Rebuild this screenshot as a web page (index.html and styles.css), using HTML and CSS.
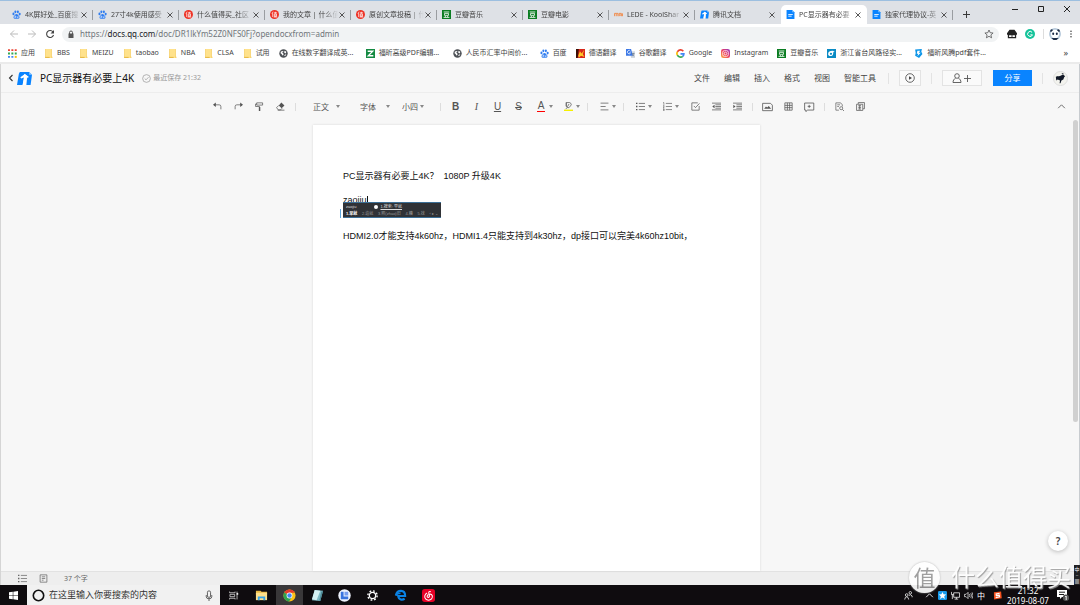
FILE: index.html
```html
<!DOCTYPE html>
<html lang="zh-CN">
<head>
<meta charset="utf-8">
<title>PC显示器有必要上4K</title>
<link rel="stylesheet" href="styles.css">
</head>
<body>
<svg class="sprite" aria-hidden="true">
  <symbol id="paw" viewBox="0 0 16 16"><g fill="#2f7df0"><ellipse cx="2.6" cy="7" rx="1.8" ry="2.4"/><ellipse cx="6" cy="3.2" rx="1.8" ry="2.5"/><ellipse cx="10.4" cy="3.2" rx="1.8" ry="2.5"/><ellipse cx="13.6" cy="7.2" rx="1.8" ry="2.4"/><path d="M8 7c2 0 2.600 1.800 4 3.200 2.500 2.300 1.300 5.300-1.200 5.300H5.200c-2.500 0-3.700-3-1.200-5.300C5.400 8.800 6 7 8 7z"/></g><path d="M6.300 10v3.500h-1.500v-1.700h1.500M9 11v2.500h2V11" fill="none" stroke="#fff" stroke-width=".9"/></symbol>
  <symbol id="zhi" viewBox="0 0 16 16"><circle cx="8" cy="8" r="8" fill="#ee3124"/><path d="M5.500 3 3.500 7M4.700 6v6.500M7 5h5.500M9.500 3.200V6.500M7.500 7h4v4.500h-4zM7.500 9.200h4M6.500 12.500h6.500" fill="none" stroke="#fff" stroke-width="1.200"/></symbol>
  <symbol id="dou" viewBox="0 0 16 16"><path fill="#0b7d22" d="M0 0h16v16H0z"/><path d="M3 3.500h10M4.500 6h7v3.500h-7zM5.500 10.500l1 2.300M10.500 10.500l-1 2.300M2.800 13.200h10.400" fill="none" stroke="#fff" stroke-width="1.400"/></symbol>
  <symbol id="lede" viewBox="0 0 16 16"><path d="M1 11V6h3v5M4 6h3v5M9 11V6h4v5M9 9h4M15 6v5" fill="none" stroke="#f08a4b" stroke-width="1.700"/></symbol>
  <symbol id="tdocs" viewBox="0 0 16 16"><path fill="#0a84ff" d="M3 1h10l3 3-1.500 11H10L11 5.500 7.500 3v5L6 15H0L2 3z"/><path fill="#fff" d="m8.500 3.300 4.300 3-1.600 1-1.200-.7L9.100 15H6l1.300-8-2.800 1-1-1.300z"/><path fill="#8fc9ff" d="m13 1 3 3h-3z"/></symbol>
  <symbol id="file" viewBox="0 0 16 16"><path fill="#0a84ff" d="M1 0h10l4 4v12H1z"/><path fill="#7cc0ff" d="M11 0v4h4z"/><path d="M4 8h8M4 11h6" stroke="#fff" stroke-width="1.500"/></symbol>
  <symbol id="folder" viewBox="0 0 16 16"><path fill="#f5cf67" d="M2 0h12v13l1 1v2H2z"/><path fill="#ffe28c" d="M3 0h10v16H3z"/><path fill="#e8bb48" d="M2 14h8v2H2z"/></symbol>
  <symbol id="globe" viewBox="0 0 16 16"><circle cx="8" cy="8" r="7.500" fill="#4d5156"/><path fill="#fff" d="M3 5c2-2 5-2 5-1s-2 1-2 2 2 1 2 3-1 3-2 2-1-3-3-3zM10 3l3 2-1 3-3-2zM9 11l4-2-2 4z"/></symbol>
  <symbol id="foxit" viewBox="0 0 16 16"><path fill="#148a42" d="M0 0h16v16H0z"/><path d="M3 4h9L4 12h9" fill="none" stroke="#fff" stroke-width="2.300"/></symbol>
  <symbol id="german" viewBox="0 0 16 16"><path fill="#d8271b" d="M0 0h16v16H0z"/><path fill="#3b1006" d="M0 0h5L3 16H0z"/><path fill="#ffc928" d="m4 12 3-8 3 4 5-7-3 8 3 5-6-2-4 3z"/></symbol>
  <symbol id="gtrans" viewBox="0 0 16 16"><path fill="#d5dae1" d="M6 4h10v12H9z"/><path fill="#3c78e6" d="M0 0h9l3 12H0z"/><path d="M8 4a3 3 0 1 0 0 3H5.500" fill="none" stroke="#fff" stroke-width="1.300"/><path d="M10 8h5M12.500 7v1M14 8c0 2-2 4-3 5M11 9l3 4" fill="none" stroke="#5a6b80"/></symbol>
  <symbol id="google" viewBox="0 0 16 16"><g fill="none" stroke-width="3"><path stroke="#ea4335" d="M13 4A6.300 6.300 0 0 0 2.500 5"/><path stroke="#fbbc05" d="M2.500 5a6 6 0 0 0 0 6"/><path stroke="#34a853" d="M2.500 11A6.300 6.300 0 0 0 12 13"/><path stroke="#4285f4" d="M12 13c1.500-1.300 2-3 2-4.500H8"/></g></symbol>
  <symbol id="insta" viewBox="0 0 16 16"><linearGradient id="ig" x1="0" y1="1" x2="1" y2="0"><stop stop-color="#fdb541"/><stop offset=".5" stop-color="#ee3c5f"/><stop offset="1" stop-color="#8a3ac8"/></linearGradient><rect width="16" height="16" rx="4" fill="url(#ig)"/><rect x="3" y="3" width="10" height="10" rx="3" fill="none" stroke="#fff" stroke-width="1.300"/><circle cx="8" cy="8" r="2.300" fill="none" stroke="#fff" stroke-width="1.300"/></symbol>
  <symbol id="typhoon" viewBox="0 0 16 16"><path fill="#0b8bc4" d="M0 0h16v16H0z"/><path fill="#fff" d="M2 9c0-6 7-7 13-5-3 0-4 1-4 4 0 6-9 6-9 1z"/><circle cx="7" cy="8.500" r="2" fill="#0b8bc4"/></symbol>
  <symbol id="fteng" viewBox="0 0 16 16"><path fill="#0c95e8" d="m2 1 12-1-1 5 2 4-6 7-7-4 1-5z"/><path fill="#fff" d="M6 3h5L8.500 6.500H12l-6 6.500 1.500-4.500H5z"/></symbol>
  <symbol id="caretup" viewBox="0 0 16 16"><path d="m2 11 6-6 6 6" fill="none" stroke="currentColor" stroke-width="1.500"/></symbol>
  <symbol id="close" viewBox="0 0 16 16"><path d="m3 3 10 10M13 3 3 13" stroke="currentColor" stroke-width="1.800"/></symbol>
  <symbol id="undo" viewBox="0 0 16 16"><path d="M2 5h9q3 0 3 3v5" fill="none" stroke="currentColor" stroke-width="1.300"/><path fill="currentColor" d="M0 5l5-4v8z"/></symbol>
  <symbol id="redo" viewBox="0 0 16 16"><path d="M14 5H5Q2 5 2 8v5" fill="none" stroke="currentColor" stroke-width="1.300"/><path fill="currentColor" d="m16 5-5-4v8z"/></symbol>
  <symbol id="brush" viewBox="0 0 16 16"><path d="M3 1.500h10.500v4H3zM3 3.500H1v4.500h7v2" fill="none" stroke="currentColor" stroke-width="1.300"/><path fill="currentColor" d="M6.800 9h2.600v7H6.800z"/></symbol>
  <symbol id="erase" viewBox="0 0 16 16"><path fill="currentColor" d="m9.500 1 5.500 5-5 5-5-5z"/><path d="m5 6-4 4 3 4h4l3-3M3 14.500h12" fill="none" stroke="currentColor" stroke-width="1.300"/></symbol>
  <symbol id="pen" viewBox="0 0 16 16"><path d="M4 1h6q3 1 3 4l-4 5H6L4 7zM4 1v7M9 3.500 6 8.500M6 10l-3 2" fill="none" stroke="currentColor" stroke-width="1.300"/><path fill="#f5f000" d="M0 13.500h16V16H0z"/></symbol>
  <symbol id="align" viewBox="0 0 16 16"><path d="M1 2h14M1 8h9M1 14h14" stroke="currentColor" stroke-width="1.300"/></symbol>
  <symbol id="list" viewBox="0 0 16 16"><path d="M5 2.500h11M5 8h11M5 13.500h11" stroke="currentColor" stroke-width="1.300"/><path d="M0 2.500h2.500M0 8h2.500M0 13.500h2.500" stroke="currentColor" stroke-width="2.500"/></symbol>
  <symbol id="num" viewBox="0 0 16 16"><path d="M5 2.500h11M5 8h11M5 13.500h11" stroke="currentColor" stroke-width="1.200"/><path d="M0 1h1.500v4M0 6.500h2v1.500L0 9.500h2.500M0 12h2v3.500H0M0 13.500h2" fill="none" stroke="currentColor"/></symbol>
  <symbol id="check" viewBox="0 0 16 16"><path d="M14.500 7v7.500h-13v-13H12M5 7l3 3 7-7.500" fill="none" stroke="currentColor" stroke-width="1.300"/></symbol>
  <symbol id="indent" viewBox="0 0 16 16"><path d="M0 2h16M6 5h10M6 8h10M6 11h10M0 14h16" stroke="currentColor" stroke-width="1.300"/><path fill="currentColor" d="m4.500 5-4 3 4 3z"/></symbol>
  <symbol id="outdent" viewBox="0 0 16 16"><path d="M0 2h16M6 5h10M6 8h10M6 11h10M0 14h16" stroke="currentColor" stroke-width="1.300"/><path fill="currentColor" d="m.5 5 4 3-4 3z"/></symbol>
  <symbol id="image" viewBox="0 0 18 16"><path d="M1 2h13l3 3v9H1z" fill="none" stroke="currentColor" stroke-width="1.300"/><path fill="currentColor" d="m3.500 11 3-4 2 2 2.500-2.500L15 11z"/></symbol>
  <symbol id="table" viewBox="0 0 16 16"><path d="M1.500 1.500h13v13h-13zM1.500 6h13M1.500 10h13M6 1.500v13M10 1.500v13" fill="none" stroke="currentColor" stroke-width="1.300"/></symbol>
  <symbol id="comment" viewBox="0 0 18 16"><path d="M1 1.500h15V13H6l-3 2.500V13H1zM8.500 4.500v5M6 7h5" fill="none" stroke="currentColor" stroke-width="1.300"/></symbol>
  <symbol id="find" viewBox="0 0 16 16"><path d="M7 14.500H1.500v-13H10L13 5v3M4 5h5M4 8h3" fill="none" stroke="currentColor" stroke-width="1.200"/><circle cx="11" cy="11" r="2.700" fill="none" stroke="currentColor" stroke-width="1.200"/><path d="m13 13 3 3" stroke="currentColor" stroke-width="1.300"/></symbol>
  <symbol id="copy" viewBox="0 0 16 16"><path d="M4 3.500V1h11v11h-2.500M1 4h11v11H1zM4 6.500h5M4 9.500h5M4 12.500h5M6.500 6v7" fill="none" stroke="currentColor" stroke-width="1.300"/></symbol>
  <symbol id="page" viewBox="0 0 16 16"><path d="M2 1.500h12v13H2zM5 5h6M5 8h6M5 11h3" fill="none" stroke="currentColor" stroke-width="1.300"/></symbol>
</svg>

<header class="browser">
  <div class="tabstrip">
    <div class="tab"><svg class="fav"><use href="#paw"/></svg><span class="tab-title">4K屏好处_百度搜</span><button class="x" aria-label="关闭"><svg><use href="#close"/></svg></button></div>
    <div class="tab"><svg class="fav"><use href="#paw"/></svg><span class="tab-title">27寸4k使用感受</span><button class="x" aria-label="关闭"><svg><use href="#close"/></svg></button></div>
    <div class="tab"><svg class="fav"><use href="#zhi"/></svg><span class="tab-title">什么值得买_社区</span><button class="x" aria-label="关闭"><svg><use href="#close"/></svg></button></div>
    <div class="tab"><svg class="fav"><use href="#zhi"/></svg><span class="tab-title">我的文章 | 什么值</span><button class="x" aria-label="关闭"><svg><use href="#close"/></svg></button></div>
    <div class="tab"><svg class="fav"><use href="#zhi"/></svg><span class="tab-title">原创文章投稿 | 什</span><button class="x" aria-label="关闭"><svg><use href="#close"/></svg></button></div>
    <div class="tab"><svg class="fav"><use href="#dou"/></svg><span class="tab-title">豆瓣音乐</span><button class="x" aria-label="关闭"><svg><use href="#close"/></svg></button></div>
    <div class="tab"><svg class="fav"><use href="#dou"/></svg><span class="tab-title">豆瓣电影</span><button class="x" aria-label="关闭"><svg><use href="#close"/></svg></button></div>
    <div class="tab"><svg class="fav"><use href="#lede"/></svg><span class="tab-title">LEDE - KoolShar</span><button class="x" aria-label="关闭"><svg><use href="#close"/></svg></button></div>
    <div class="tab no-line"><svg class="fav"><use href="#tdocs"/></svg><span class="tab-title">腾讯文档</span><button class="x" aria-label="关闭"><svg><use href="#close"/></svg></button></div>
    <div class="tab active"><svg class="fav"><use href="#file"/></svg><span class="tab-title">PC显示器有必要</span><button class="x" aria-label="关闭"><svg><use href="#close"/></svg></button></div>
    <div class="tab"><svg class="fav"><use href="#file"/></svg><span class="tab-title">独家代理协议-英</span><button class="x" aria-label="关闭"><svg><use href="#close"/></svg></button></div>
    <button class="newtab" aria-label="新标签页"><svg viewBox="0 0 8 8"><path d="M4 0v8M0 4h8" stroke="#333" stroke-width="1.100"/></svg></button>
    <div class="winbtns">
      <button aria-label="最小化"><svg viewBox="0 0 8 8"><path d="M1 4.500h6" stroke="#222"/></svg></button>
      <button aria-label="还原"><svg viewBox="0 0 8 8"><path d="M1.500 1.500h5v5h-5z" fill="none" stroke="#222"/></svg></button>
      <button aria-label="关闭窗口"><svg viewBox="0 0 8 8"><path d="m1 1 6 6M7 1 1 7" stroke="#222"/></svg></button>
    </div>
  </div>
  <div class="addressbar">
    <button class="nav dim" aria-label="后退"><svg viewBox="0 0 10 10"><path d="M9 5H1.500M5 1.500 1.500 5 5 8.500" fill="none" stroke="currentColor"/></svg></button>
    <button class="nav dim" aria-label="前进"><svg viewBox="0 0 10 10"><path d="M1 5h7.500M5 1.500 8.500 5 5 8.500" fill="none" stroke="currentColor"/></svg></button>
    <button class="nav" aria-label="刷新"><svg viewBox="0 0 10 10"><path d="M8 3a3.500 3.500 0 1 0 .5 3" fill="none" stroke="currentColor" stroke-width="1.100"/><path d="M9 1v3.500H5.500z" fill="currentColor"/></svg></button>
    <div class="omnibox">
      <svg class="lock" viewBox="0 0 8 8"><path d="M1.500 3.500h5V8h-5z" fill="#555"/><path d="M2.500 4V2.500a1.500 1.500 0 0 1 3 0V4" fill="none" stroke="#555"/></svg>
      <a class="url" href="#">https://<b>docs.qq.com</b>/doc/DR1lkYm52Z0NFS0Fj?opendocxfrom=admin</a>
      <svg class="star" viewBox="0 0 10 10"><path d="m5 1 1.200 2.700 2.900.3-2.200 1.900.7 2.900L5 7.300 2.400 8.800l.7-2.900L.9 4l2.900-.3z" fill="none" stroke="#555" stroke-width=".8"/></svg>
    </div>
    <div class="exts">
      <svg viewBox="0 0 12 12"><path fill="#222" d="M3 1h6l3 4v2H0V5zM1 6h10v5H1z"/><path fill="#fff" d="M2.500 7.500h3v2h-3zM6.500 7.500h3v2h-3z"/></svg>
      <svg viewBox="0 0 12 12"><circle cx="6" cy="6" r="6" fill="#15c39a"/><path d="M8.500 4A3 3 0 1 0 9 7H6.500" fill="none" stroke="#fff" stroke-width="1.200"/></svg>
      <i class="extsep"></i>
      <svg class="panda" viewBox="0 0 12 12"><circle cx="6" cy="6" r="6" fill="#b9cbdc"/><circle cx="2.700" cy="2.700" r="1.500" fill="#1b2b45"/><circle cx="9.300" cy="2.700" r="1.500" fill="#1b2b45"/><circle cx="6" cy="6" r="4.200" fill="#fff"/><ellipse cx="4.200" cy="5.800" rx="1" ry="1.300" fill="#1b2b45"/><ellipse cx="7.800" cy="5.800" rx="1" ry="1.300" fill="#1b2b45"/><path d="M2.500 10h7l-2 2h-3z" fill="#1b2b45"/></svg>
      <svg viewBox="0 0 12 12"><g fill="#444"><circle cx="6" cy="1.800" r="1.200"/><circle cx="6" cy="6" r="1.200"/><circle cx="6" cy="10.200" r="1.200"/></g></svg>
    </div>
  </div>
  <nav class="bookmarks" aria-label="书签">
    <a href="#"><svg viewBox="0 0 16 16"><g stroke-width="3.500" stroke-dasharray="3.500 2.500"><path stroke="#ea4335" d="M0 2h16"/><path stroke="#34a853" d="M0 8h16"/><path stroke="#4285f4" d="M0 14h10"/><path stroke="#fbbc05" d="M12 14h4"/></g></svg>应用</a>
    <a href="#"><svg><use href="#folder"/></svg>BBS</a>
    <a href="#"><svg><use href="#folder"/></svg>MEIZU</a>
    <a href="#"><svg><use href="#folder"/></svg>taobao</a>
    <a href="#"><svg><use href="#folder"/></svg>NBA</a>
    <a href="#"><svg><use href="#folder"/></svg>CLSA</a>
    <a href="#"><svg><use href="#folder"/></svg>试用</a>
    <a href="#" class="long"><svg><use href="#globe"/></svg>在线数字翻译成英...</a>
    <a href="#" class="long"><svg><use href="#foxit"/></svg>福昕高级PDF编辑...</a>
    <a href="#" class="long"><svg><use href="#globe"/></svg>人民币汇率中间价...</a>
    <a href="#"><svg><use href="#paw"/></svg>百度</a>
    <a href="#"><svg><use href="#german"/></svg>德语翻译</a>
    <a href="#"><svg><use href="#gtrans"/></svg>谷歌翻译</a>
    <a href="#"><svg><use href="#google"/></svg>Google</a>
    <a href="#"><svg><use href="#insta"/></svg>Instagram</a>
    <a href="#"><svg><use href="#dou"/></svg>豆瓣音乐</a>
    <a href="#" class="long"><svg><use href="#typhoon"/></svg>浙江省台风路径实...</a>
    <a href="#" class="long"><svg><use href="#fteng"/></svg>福昕风腾pdf套件...</a>
    <button class="more" aria-label="更多书签">»</button>
  </nav>
</header>

<main class="app">
  <header class="dochead">
    <button class="back" aria-label="返回"><svg viewBox="0 0 6 8"><path d="M4.500 1 1.500 4l3 3" fill="none" stroke="#333" stroke-width="1.100"/></svg></button>
    <svg class="logo"><use href="#tdocs"/></svg>
    <h1>PC显示器有必要上4K</h1>
    <span class="saved"><svg viewBox="0 0 10 10"><circle cx="5" cy="5" r="4.300" fill="none" stroke="#999" stroke-width=".8"/><path d="m3 5 1.500 1.500L7.300 3.500" fill="none" stroke="#999" stroke-width=".8"/></svg>最近保存 21:32</span>
    <nav class="menus">
      <button>文件</button><button>编辑</button><button>插入</button><button>格式</button><button>视图</button><button>智能工具</button>
    </nav>
    <i class="hsep"></i>
    <button class="box play" aria-label="演示"><svg viewBox="0 0 10 10"><circle cx="5" cy="5" r="4.300" fill="none" stroke="#444" stroke-width=".8"/><path d="M4 3.200 7 5 4 6.800z" fill="#444"/></svg></button>
    <i class="hsep"></i>
    <button class="box invite" aria-label="添加协作者"><svg viewBox="0 0 20 10"><g fill="none" stroke="#555" stroke-width=".9"><circle cx="5" cy="3" r="2.300"/><path d="M3.700 5C2 6 1 7.500 1 9.500h8C9 7.500 8 6 6.300 5M12 5.500h7M15.500 2v7"/></g></svg></button>
    <button class="share">分享</button>
    <i class="hsep"></i>
    <svg class="avatar" viewBox="0 0 16 16"><circle cx="8" cy="8" r="7.500" fill="#f3f3ee" stroke="#ddd"/><path fill="#111827" d="M3 6c2-1 4 0 6-1.500L11 4l2 1.500-1 1-1 2.500-2 1-1 3H7l.5-3L5 9l-1.500 1zM9 3l2-1v2z"/></svg>
  </header>

  <div class="toolbar" role="toolbar" aria-label="格式工具">
    <button class="ib" aria-label="撤销"><svg><use href="#undo"/></svg></button>
    <button class="ib" aria-label="重做"><svg><use href="#redo"/></svg></button>
    <button class="ib" aria-label="格式刷"><svg><use href="#brush"/></svg></button>
    <button class="ib" aria-label="清除格式"><svg><use href="#erase"/></svg></button>
    <i class="sep"></i>
    <div class="pick style"><select aria-label="样式"><option>正文</option></select><i class="caret"></i></div>
    <div class="pick font"><select aria-label="字体"><option>字体</option></select><i class="caret"></i></div>
    <div class="pick size"><select aria-label="字号"><option>小四</option></select><i class="caret"></i></div>
    <i class="sep"></i>
    <button class="ib bold">B</button>
    <button class="ib italic">I</button>
    <button class="ib under">U</button>
    <button class="ib strike">S</button>
    <button class="split"><span class="color">A</span><i class="caret"></i></button>
    <button class="split" aria-label="高亮"><span><svg><use href="#pen"/></svg></span><i class="caret"></i></button>
    <i class="sep"></i>
    <button class="split" aria-label="对齐"><span><svg><use href="#align"/></svg></span><i class="caret"></i></button>
    <i class="sep"></i>
    <button class="split" aria-label="无序列表"><span><svg><use href="#list"/></svg></span><i class="caret"></i></button>
    <button class="split" aria-label="有序列表"><span><svg><use href="#num"/></svg></span><i class="caret"></i></button>
    <button class="ib" aria-label="任务"><svg><use href="#check"/></svg></button>
    <button class="ib" aria-label="减少缩进"><svg><use href="#indent"/></svg></button>
    <button class="ib" aria-label="增加缩进"><svg><use href="#outdent"/></svg></button>
    <i class="sep"></i>
    <button class="ib wide" aria-label="图片"><svg><use href="#image"/></svg></button>
    <button class="ib" aria-label="表格"><svg><use href="#table"/></svg></button>
    <button class="ib wide" aria-label="评论"><svg><use href="#comment"/></svg></button>
    <i class="sep"></i>
    <button class="ib" aria-label="查找"><svg><use href="#find"/></svg></button>
    <button class="ib" aria-label="目录"><svg><use href="#copy"/></svg></button>
    <button class="ib collapse" aria-label="收起"><svg><use href="#caretup"/></svg></button>
  </div>

  <div class="workspace">
    <article class="paper">
      <p>PC显示器有必要上4K？&nbsp; 1080P 升级4K</p>
      <div class="typing">
        <p>zaojiu<i class="cursor"></i></p>
        <div class="ime">
          <div class="ime-top"><span>zaojiu</span><i class="dot"></i><u>1.搜索: 早就</u></div>
          <div class="ime-list"><b>1.早就</b><span>2.造就</span><span>3.照(zhao)旧</span><span>4.糟</span><span>5.找</span><span>‹ ▸ ⌄</span></div>
        </div>
      </div>
      <p>HDMI2.0才能支持4k60hz，HDMI1.4只能支持到4k30hz，dp接口可以完美4k60hz10bit，</p>
    </article>
    <div class="scroll"><i></i></div>
    <button class="help" aria-label="帮助">?</button>
  </div>

  <footer class="status">
    <svg><use href="#list"/></svg>
    <svg><use href="#page"/></svg>
    <span>37 个字</span>
  </footer>
</main>

<footer class="taskbar">
  <button class="start" aria-label="开始"><svg viewBox="0 0 10 10"><path fill="#fff" d="m0 1.500 4.200-.7v3.900H0zM4.800.7 10 0v4.700H4.800zM0 5.300h4.200v3.900L0 8.500zM4.800 5.300H10V10l-5.200-.7z"/></svg></button>
  <label class="search"><svg class="ring" viewBox="0 0 12 12"><circle cx="6" cy="6" r="4.800" fill="none" stroke="#111" stroke-width="1.500"/></svg><input type="text" placeholder="在这里输入你要搜索的内容" aria-label="搜索"><svg class="mic" viewBox="0 0 8 12"><rect x="2.300" y="1" width="3.400" height="7" rx="1.500" fill="none" stroke="#555"/><path d="M1 5.500v2q0 2 3 2t3-2v-2M4 9.500V12" fill="none" stroke="#555"/></svg></label>
  <div class="apps">
    <button aria-label="任务视图"><svg viewBox="0 0 14 14"><path d="M2 2v1.500h7V2M2 12v-1.500h7V12M2.500 5.500h6v3h-6zM11.500 2v10" fill="none" stroke="#ddd"/><path fill="#fff" d="M11 4h2v2h-2z"/></svg></button>
    <button aria-label="文件资源管理器"><svg viewBox="0 0 14 14"><path fill="#e9b944" d="M1 2h5l1 1h6v3H1z"/><path fill="#ffe08a" d="M1 4h12v8H1z"/><path fill="#37a4e8" d="M3 8h8v4H9v-2H5v2H3z"/></svg></button>
    <button class="on" aria-label="Chrome"><svg viewBox="0 0 14 14"><circle cx="7" cy="7" r="6.500" fill="#fbc116"/><path fill="#e33b2e" d="M7 7 1.300 3.800A6.500 6.500 0 0 1 12.800 4H7z"/><path fill="#2fa350" d="M7 7 1.300 3.800A6.500 6.500 0 0 0 6.500 13.500L9.600 8.500z"/><circle cx="7" cy="7" r="3.100" fill="#fff"/><circle cx="7" cy="7" r="2.400" fill="#4285f4"/></svg></button>
    <button aria-label="记事本"><svg viewBox="0 0 14 14"><path fill="#7eb9c4" d="m4 1 9 1-3 11-9-1z"/><path fill="#d5f1f3" d="m4 1 6 1-4 10-5-1z"/><path fill="#4b8996" d="m11 3 2-1-3 11-1-1z"/></svg></button>
    <button aria-label="应用"><svg viewBox="0 0 14 14"><circle cx="7" cy="7" r="6.700" fill="#eef2fc"/><path fill="#3974df" d="M3 3h3v5h5v3H3z"/><path fill="#759cef" d="M7 3h4v4H7z"/></svg></button>
    <button aria-label="设置"><svg viewBox="0 0 14 14"><circle cx="7" cy="7" r="3.400" fill="none" stroke="#fff" stroke-width="1.400"/><circle cx="7" cy="7" r="5" fill="none" stroke="#fff" stroke-width="1.500" stroke-dasharray="1.900 2.027"/></svg></button>
    <button aria-label="Edge"><svg viewBox="0 0 14 14"><path d="M2 7C3 2.500 6 2 7.500 2 11 2 12 5 12 7.500H4.500C5 12 9 12 11.500 10.500" fill="none" stroke="#0a82e4" stroke-width="2.300"/><path d="M2 7c1-2 3-2.500 5-2.500" fill="none" stroke="#0a82e4" stroke-width="1.500"/></svg></button>
    <button aria-label="网易云音乐"><svg viewBox="0 0 14 14"><rect width="14" height="14" rx="3" fill="#e60026"/><path d="M9.500 3C8 2 7 3 7.300 4.500l.7 3c.3 2-2.500 2-2.500.2C5.500 5.500 10 4.500 11 7c1 3-1.500 5-4 5s-4.500-2-4-4.500Q3.500 5 5.500 4.300" fill="none" stroke="#fff" stroke-width="1.100"/></svg></button>
  </div>
  <div class="tray">
    <svg class="people" viewBox="0 0 10 10"><g fill="none" stroke="#eee" stroke-width=".9"><circle cx="3" cy="4.500" r="1.500"/><path d="M.8 9.500Q1 6.500 3 6.500t2.200 3"/><circle cx="7" cy="2" r="1.400"/><path d="M5.500 5Q7 3 9 5.500V7"/></g></svg>
    <svg><use href="#caretup"/></svg>
    <svg viewBox="0 0 10 10"><rect width="10" height="10" rx="1.500" fill="#189bec"/><path fill="#fff" d="m5 1 1.200 2.700 2.900.3-2.200 1.900.7 2.900L5 7.300 2.400 8.800l.7-2.900L.9 4l2.900-.3z"/></svg>
    <svg viewBox="0 0 10 10"><path d="M3 2h6.500v5H3zM6 7v2M4 9h4M.5 1v3H3M1.500 4v5" fill="none" stroke="#eee" stroke-width=".9"/></svg>
    <svg viewBox="0 0 10 10"><path d="M.5 3.700h1.800L4.500 1.500v7L2.300 6.300H.5zM6 3.500q1 1.500 0 3M7.500 2.500q1.800 2.500 0 5M9 1.500q2 3.500 0 7" fill="none" stroke="#eee" stroke-width=".8"/></svg>
    <span class="lang">中</span>
    <svg class="sogou" viewBox="0 0 10 10"><path fill="#f4511e" d="M1 1.500 9 .5l.7 7.500-8.500 1.500z"/><path d="M7.300 2.700 3.500 3.300 3.700 5l3.300-.3.200 1.800-4.200.8" fill="none" stroke="#fff" stroke-width="1.300"/></svg>
  </div>
  <time class="clock">21:32<br>2019-08-07</time>
  <button class="notice" aria-label="通知"><svg viewBox="0 0 12 12"><path fill="#fff" d="M0 1h10v7H5l-2 2V8H0z"/><path d="M2 3.200h6M2 5.500h5" stroke="#222"/><circle cx="9" cy="8.800" r="3.200" fill="#555"/><path d="M8.200 8 9.200 7v4" fill="none" stroke="#fff" stroke-width=".9"/></svg></button>
</footer>

<div class="minibar"><span>中</span><span>··</span><span>▦</span></div>
<div class="watermark"><span class="seal">值</span><span class="brand">什么值得买</span></div>
</body>
</html>
```

FILE: styles.css
```css
* { box-sizing: border-box; }

body {
  margin: 0;
  height: 100vh;
  display: flex;
  flex-direction: column;
  overflow: hidden;
  position: relative;
  font: 8px/12px "Noto Sans", "Noto Sans CJK SC", sans-serif;
  color: #444;
  background: #f7f7f7;
}

button, input, select {
  font: inherit;
  color: inherit;
  border: 0;
  padding: 0;
  margin: 0;
  background: none;
}

button { display: flex; align-items: center; justify-content: center; }
a { color: inherit; text-decoration: none; }
svg { display: block; flex: none; }
.sprite { position: absolute; width: 0; height: 0; }

/* Browser chrome */
.browser { flex: none; background: #fff; border-top: 1px solid #9cbfe0; border-bottom: 2px solid #ebebeb; }

.tabstrip { display: flex; height: 23px; padding: 4px 0 0 7px; background: #dee1e6; }
.tab {
  flex: 0 1 86px;
  min-width: 0;
  display: flex;
  align-items: center;
  padding: 0 5px 0 5px;
  font-size: 7px;
  position: relative;
}
.tab::after { content: ""; position: absolute; right: 0; top: 5px; height: 10px; border-right: 1px solid #9a9da1; }
.tab.active::after, .tab.no-line::after { content: none; }
.tab.active { background: #fff; border-radius: 5px 5px 0 0; }
.fav { width: 9px; height: 9px; }
.tab-title {
  flex: 1;
  min-width: 0;
  margin-left: 4px;
  overflow: hidden;
  white-space: nowrap;
  mask-image: linear-gradient(90deg, #000 75%, transparent);
}
.x svg { width: 8px; height: 8px; }
.newtab { width: 26px; }
.newtab svg { width: 7px; height: 7px; }
.winbtns { margin-left: auto; display: flex; align-items: flex-start; }
.winbtns button { width: 26px; height: 8px; }
.winbtns svg { width: 8px; height: 8px; }

.addressbar { display: flex; align-items: center; height: 20px; padding: 0 5px; }
.nav { width: 18px; }
.nav svg { width: 10px; height: 10px; }
.dim { color: #bbb; }
.omnibox {
  flex: 1;
  display: flex;
  align-items: center;
  height: 15px;
  margin-left: 3px;
  padding: 0 5px;
  border-radius: 8px;
  background: #f1f3f4;
}
.lock { width: 8px; height: 8px; }
.url { flex: 1; margin-left: 5px; color: #70757a; }
.url b { font-weight: 400; color: #202124; }
.star { width: 10px; height: 10px; }
.exts { display: flex; align-items: center; gap: 8px; margin-left: 8px; }
.exts svg { width: 10px; height: 10px; }
.exts .panda { width: 12px; height: 12px; }
.exts svg:last-child { width: 8px; height: 8px; margin-left: -2px; }
.extsep { height: 10px; margin-right: -3px; border-left: 1px solid #ddd; }

.bookmarks { display: flex; align-items: center; gap: 9px; height: 18px; padding: 0 12px 0 8px; font-size: 7px; white-space: nowrap; }
.bookmarks a { display: flex; align-items: center; gap: 4px; }
.bookmarks svg { width: 9px; height: 9px; }
.bookmarks .long { width: 78px; }
.more { margin-left: auto; font-size: 9px; }

/* Document header */
.app { flex: 1; min-height: 0; display: flex; flex-direction: column; border-left: 1px solid #d5d5d5; border-right: 1px solid #c8ccd0; }
.dochead { display: flex; align-items: center; flex: none; height: 29px; padding: 0 11px 0 7px; border-bottom: 1px solid #ededed; }
.back svg { width: 6px; height: 8px; }
.logo { width: 15px; height: 15px; margin-left: 3px; }
h1 { margin: 0 0 0 8px; font-size: 10px; line-height: 16px; font-weight: 400; color: #111; }
.saved { display: flex; align-items: center; gap: 2px; margin-left: 8px; font-size: 7px; color: #999; }
.saved svg { width: 9px; height: 9px; }
.menus { display: flex; gap: 14px; margin-left: auto; }
.hsep { height: 11px; margin: 0 10px; border-left: 1px solid #e3e3e3; }
.menus + .hsep { margin-left: 12px; }
.box { height: 16px; border: 1px solid #e3e3e3; background: #fafafa; }
.play { width: 22px; }
.play svg { width: 10px; height: 10px; }
.invite { width: 40px; }
.invite svg { width: 20px; height: 10px; }
.share { width: 39px; height: 16px; margin-left: 11px; background: #0a84ff; color: #fff; }
.avatar { width: 15px; height: 15px; }

/* Formatting toolbar */
.toolbar { display: flex; align-items: center; flex: none; height: 27px; padding: 0 7px 0 206px; color: #555; }
.ib { width: 21px; height: 16px; flex: none; }
.toolbar svg { width: 9px; height: 9px; }
.toolbar .wide svg { width: 11px; height: 10px; }
.sep { flex: none; width: 9px; height: 8px; background: linear-gradient(#ddd, #ddd) center / 1px 100% no-repeat; }
.pick { display: flex; align-items: center; flex: none; }
.pick select { width: 16px; appearance: none; }
.style { margin-left: 13px; gap: 7px; }
.font { margin-left: 20px; gap: 10px; }
.size { margin: 0 12px; gap: 2px; }
.caret { width: 4px; height: 3px; flex: none; background: #888; clip-path: polygon(0 0, 100% 0, 50% 100%); }
.bold, .italic, .under, .strike, .color { font-family: "Liberation Sans", Arial, sans-serif; font-size: 10px; }
.bold { font-weight: 700; }
.italic { font-family: "Liberation Serif", serif; font-style: italic; }
.under { text-decoration: underline; }
.strike { text-decoration: line-through; }
.split { width: 27px; height: 16px; padding-left: 4px; justify-content: flex-start; flex: none; }
.split span { width: 16px; display: flex; justify-content: center; }
.split .color { width: 8px; margin: 0 4px; line-height: 10px; border-bottom: 1px solid #f00; }
.split + .ib { margin-left: 3px; }
.collapse { margin-left: auto; }

/* Page area */
.workspace { flex: 1; min-height: 0; display: flex; position: relative; }
.paper {
  width: 447px;
  margin: 5px auto 0;
  padding: 42px 30px 0;
  background: #fff;
  box-shadow: 0 0 2px #d5d5d5;
  font: 9px/18px "Liberation Sans", "Noto Sans CJK SC", sans-serif;
  color: #111;
}
.paper p { margin: 0; white-space: nowrap; }
.typing { position: relative; margin: 6px 0 18px; }
.cursor { display: inline-block; height: 9px; border-left: 1px solid #111; vertical-align: -2px; }
.ime {
  position: absolute;
  left: 0;
  top: 11px;
  width: 98px;
  background: #303236;
  border-top: 1px solid #3c6f96;
  border-bottom: 1px solid #3c6f96;
  color: #bbb;
  font-size: 4px;
  line-height: 7px;
  white-space: nowrap;
}
.ime::before { content: ""; position: absolute; left: -3px; top: 6px; height: 9px; border-left: 1px solid #5da7df; }
.ime-top, .ime-list { display: flex; align-items: center; padding: 0 3px; }
.ime-top { color: #ddd; }
.ime-list { justify-content: space-between; color: #999; }
.ime-list b { color: #fff; }
.dot { width: 4px; height: 4px; margin: 0 2px 0 18px; border-radius: 50%; background: #fff; }
.scroll { width: 7px; padding: 0 1px; }
.scroll i { display: block; height: 67%; border-radius: 3px; background: #d0d0d0; }
.help {
  position: absolute;
  right: 11px;
  bottom: 20px;
  width: 20px;
  height: 20px;
  border-radius: 50%;
  background: #fff;
  box-shadow: 0 1px 4px #bbb;
  font-size: 10px;
  font-weight: 600;
}

.status { display: flex; align-items: center; flex: none; gap: 12px; height: 14px; padding: 0 17px; background: #eee; border-top: 1px solid #e2e2e2; font-size: 7px; color: #666; }
.status svg { width: 9px; height: 9px; }
.status span { margin-left: 4px; }

/* Taskbar */
.taskbar { display: flex; align-items: center; flex: none; height: 20px; background: #0f0c0f; color: #fff; }
.taskbar > * { height: 20px; }
.start { width: 27px; }
.start svg { width: 9px; height: 9px; }
.search { display: flex; align-items: center; width: 193px; padding: 0 7px 0 5px; background: #f1f1f1; color: #222; }
.ring { width: 13px; height: 13px; }
.search input { flex: 1; min-width: 0; margin-left: 4px; font-size: 9px; outline: 0; }
.search input::placeholder { color: #333; opacity: 1; }
.mic { width: 8px; height: 11px; }
.apps { display: grid; grid-template-columns: repeat(8, 1fr); width: 222px; }
.apps svg { width: 13px; height: 13px; }
.apps button:first-child svg { width: 11px; height: 11px; }
.apps .on { background: #393739; }
.tray { display: flex; align-items: center; gap: 4px; margin-left: auto; }
.tray svg, .lang { width: 9px; height: 9px; }
.lang { line-height: 9px; }
.tray .people { margin-right: 8px; }
.tray .sogou { margin: 0 4px 0 3px; }
.clock { width: 44px; padding-top: 1px; text-align: center; line-height: 10px; white-space: nowrap; }
.notice { width: 30px; padding-right: 4px; }
.notice svg { width: 12px; height: 12px; }

/* Overlays */
.minibar { position: absolute; right: 0; bottom: 20px; width: 6px; padding: 1px 0; display: flex; flex-direction: column; align-items: center; background: #202124; color: #fff; font-size: 5px; line-height: 6px; }
.watermark { position: absolute; right: 9px; bottom: 12px; display: flex; gap: 11px; color: #fff; font: 24px/28px "Noto Sans CJK SC", sans-serif; text-shadow: 1px 1px 1px #999; opacity: .92; pointer-events: none; }
.seal { width: 31px; height: 31px; border-radius: 50%; background: #fff; box-shadow: 0 0 2px #aaa; color: #999; font-size: 22px; text-align: center; text-shadow: none; }
```
